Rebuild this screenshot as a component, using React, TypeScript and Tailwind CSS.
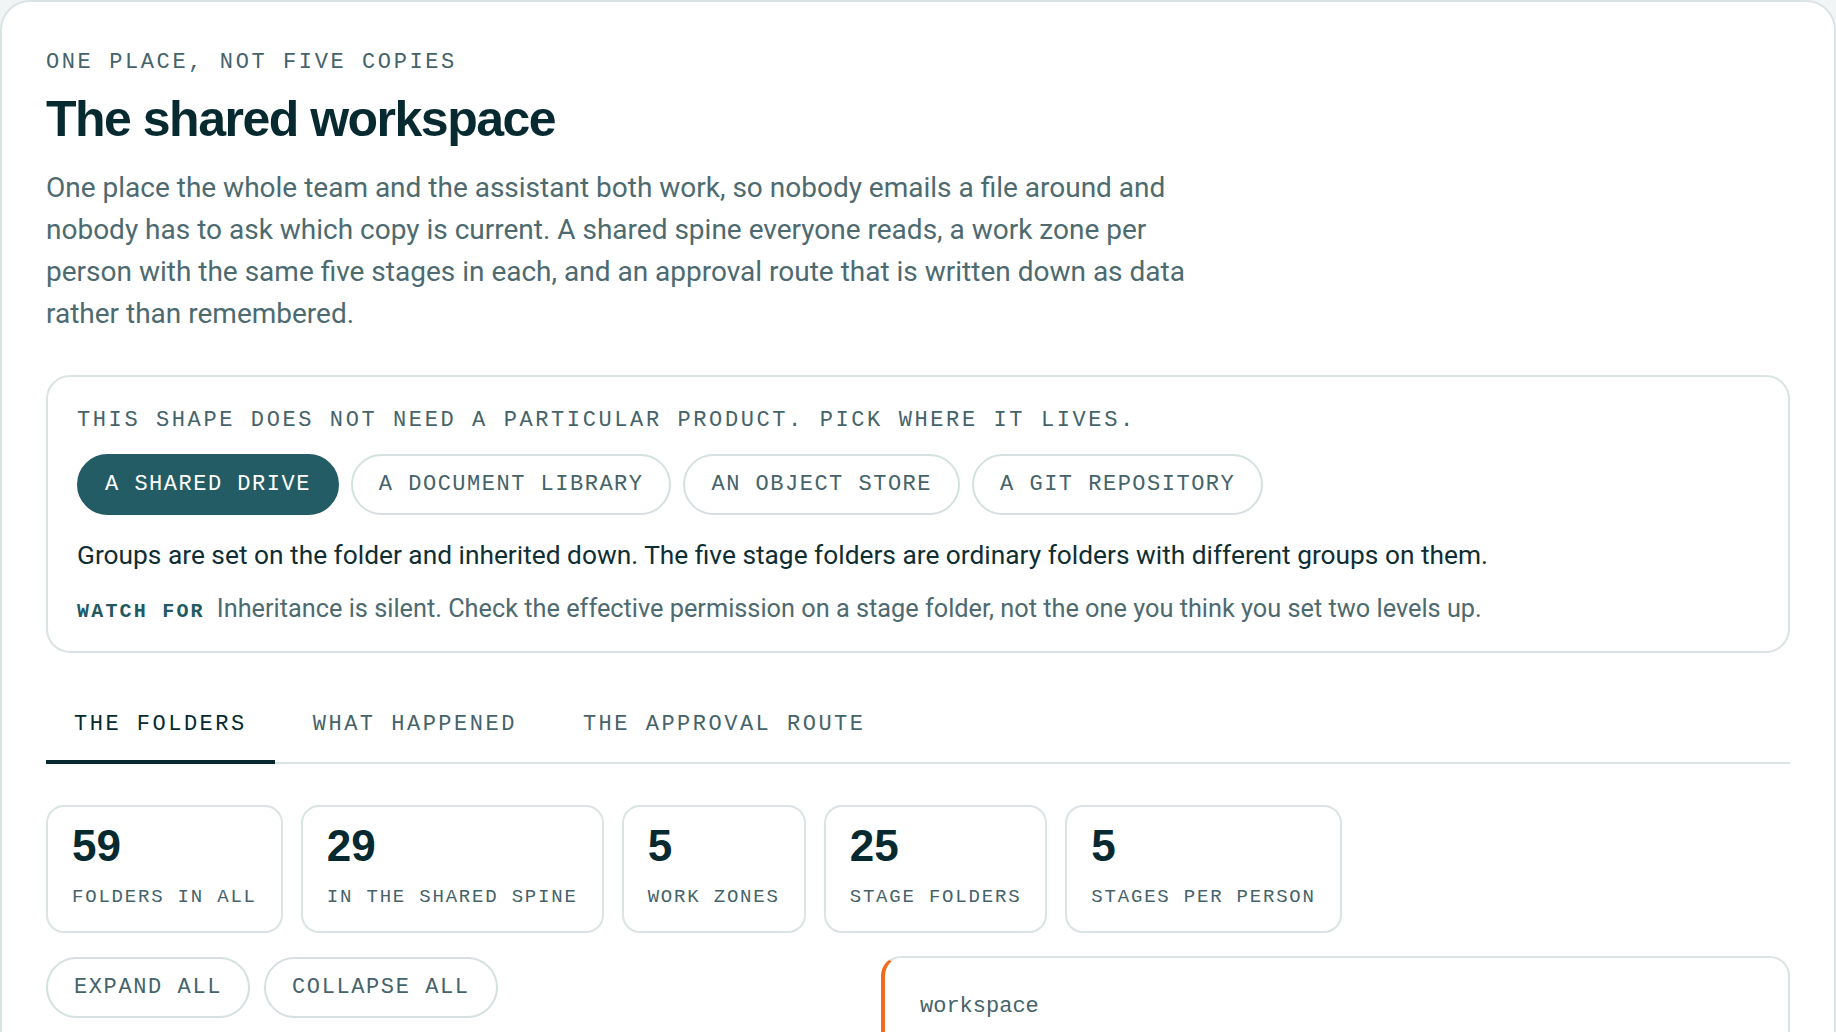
import { useState } from "react";

const MONO = "font-['Liberation_Mono',monospace]";
const SANS = "font-['Roboto',sans-serif]";
const DISPLAY = "font-['Liberation_Sans',Arial,sans-serif]";

const homes = ["A shared drive", "A document library", "An object store", "A git repository"];
const tabs = ["The folders", "What happened", "The approval route"];
const stats: [string, string][] = [
  ["59", "Folders in all"],
  ["29", "In the shared spine"],
  ["5", "Work zones"],
  ["25", "Stage folders"],
  ["5", "Stages per person"],
];

export default function App() {
  const [home, setHome] = useState(0);
  const [tab, setTab] = useState(0);

  return (
    <div className="min-h-screen bg-[#f2f5f5]">
      <div className="min-h-[1200px] rounded-[30px] border-2 border-[#dbe3e4] bg-white px-[44px] pt-[47px]">
        <p className={`${MONO} text-[22px] leading-[28px] tracking-[2.6px] uppercase text-[#45636a]`}>
          One place, not five copies
        </p>
        <h1 className={`${DISPLAY} mt-[14px] text-[50px] font-bold leading-[56px] tracking-[-1.5px] text-[#062a30]`}>
          The shared workspace
        </h1>
        <p className={`${SANS} mt-[20px] max-w-[1175px] text-[28px] leading-[42px] text-[#4d6a70]`}>
          One place the whole team and the assistant both work, so nobody emails a file around and nobody has to
          ask which copy is current. A shared spine everyone reads, a work zone per person with the same five stages
          in each, and an approval route that is written down as data rather than remembered.
        </p>

        {/* where it lives */}
        <div className="mt-[40px] rounded-[24px] border-2 border-[#dbe3e4] px-[29px] pt-[30px] pb-[23px]">
          <p className={`${MONO} text-[22px] leading-[28px] tracking-[2.6px] uppercase text-[#45636a]`}>
            This shape does not need a particular product. Pick where it lives.
          </p>
          <div className="mt-[19px] flex gap-[12px]">
            {homes.map((h, i) => (
              <button
                key={h}
                onClick={() => setHome(i)}
                className={`${MONO} h-[61px] rounded-full border-2 px-[26px] text-[22px] tracking-[1.5px] uppercase ${
                  i === home
                    ? "border-[#235c64] bg-[#235c64] text-white"
                    : "border-[#d6e0e1] bg-white text-[#45636a]"
                }`}
              >
                {h}
              </button>
            ))}
          </div>
          <p className={`${SANS} mt-[22px] text-[26.3px] leading-[36px] text-[#0f2e33]`}>
            Groups are set on the folder and inherited down. The five stage folders are ordinary folders with
            different groups on them.
          </p>
          <p className={`${SANS} mt-[20px] text-[25.3px] leading-[32px] text-[#4d6a70]`}>
            <span className={`${MONO} mr-[12px] text-[20px] font-bold tracking-[2.2px] text-[#1f5a62]`}>
              WATCH FOR
            </span>
            Inheritance is silent. Check the effective permission on a stage folder, not the one you think you set
            two levels up.
          </p>
        </div>

        {/* tabs */}
        <div className="mt-[32px] flex gap-[10px] border-b-2 border-[#dbe3e4]">
          {tabs.map((t, i) => (
            <button
              key={t}
              onClick={() => setTab(i)}
              className={`${MONO} -mb-[2px] border-b-4 px-[28px] pt-[26px] pb-[21px] text-[22px] leading-[28px] tracking-[2.5px] uppercase ${
                i === tab ? "border-[#062a30] text-[#062a30]" : "border-transparent text-[#45636a]"
              }`}
            >
              {t}
            </button>
          ))}
        </div>

        {/* counts */}
        <div className="mt-[41px] flex gap-[18px]">
          {stats.map(([n, label]) => (
            <div key={label} className="rounded-[18px] border-2 border-[#dbe3e4] px-[24px] pt-[16px] pb-[22px]">
              <p className={`${DISPLAY} text-[44px] font-bold leading-[46px] text-[#062a30]`}>{n}</p>
              <p className={`${MONO} mt-[16px] text-[19px] leading-[24px] tracking-[1.8px] uppercase text-[#45636a]`}>
                {label}
              </p>
            </div>
          ))}
        </div>

        <div className="mt-[23px] grid grid-cols-[minmax(0,1fr)_909px] gap-[32px]">
          <div className="flex items-start gap-[14px] pt-[1px]">
            <button
              className={`${MONO} h-[61px] rounded-full border-2 border-[#d6e0e1] px-[26px] text-[22px] tracking-[1.6px] uppercase text-[#45636a]`}
            >
              Expand all
            </button>
            <button
              className={`${MONO} h-[61px] rounded-full border-2 border-[#d6e0e1] px-[26px] text-[22px] tracking-[1.6px] uppercase text-[#45636a]`}
            >
              Collapse all
            </button>
          </div>
          <div className="min-h-[320px] rounded-[20px] border-2 border-l-4 border-[#dbe3e4] border-l-[#f26a1b] pl-[35px] pt-[35px]">
            <p className={`${MONO} text-[22px] leading-[28px] text-[#45636a]`}>workspace</p>
          </div>
        </div>
      </div>
    </div>
  );
}
